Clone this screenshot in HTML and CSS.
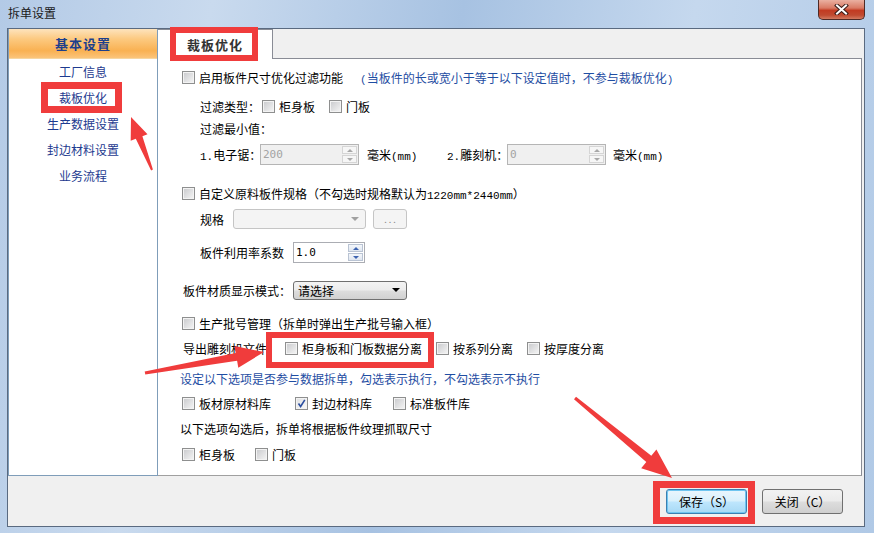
FILE: index.html
```html
<!DOCTYPE html>
<html>
<head>
<meta charset="utf-8">
<link rel="stylesheet" href="styles.css">
</head>
<body>
<div class="window">
  <div class="titlebar">
    <span class="title">拆单设置</span>
    <div class="closebtn">
      <svg width="15" height="11" viewBox="0 0 15 11"><path d="M3 1.5 L12 9.5 M12 1.5 L3 9.5" stroke="#3a1c18" stroke-width="4" stroke-linecap="square"/><path d="M3 1.5 L12 9.5 M12 1.5 L3 9.5" stroke="#fff" stroke-width="2" stroke-linecap="square"/></svg>
    </div>
  </div>
  <div class="client">
    <div class="main">
      <div class="sidebar">
        <div class="side-head">基本设置</div>
        <ul class="nav">
          <li>工厂信息</li>
          <li>裁板优化</li>
          <li>生产数据设置</li>
          <li>封边材料设置</li>
          <li>业务流程</li>
        </ul>
      </div>
      <div class="tabs">
        <div class="tabbar">
          <div class="tab">裁板优化</div>
          <div class="tabfill"></div>
        </div>
        <div class="panel">
          <div class="row mt8">
            <label class="chk"><span class="box"></span><span>启用板件尺寸优化过滤功能</span></label>
            <span class="blue note"><span class="lat">(</span>当板件的长或宽小于等于以下设定值时，不参与裁板优化<span class="lat">)</span></span>
          </div>
          <div class="row mt9 ind">
            <span class="w62">过滤类型：</span>
            <label class="chk"><span class="box"></span><span>柜身板</span></label>
            <label class="chk ml14"><span class="box"></span><span>门板</span></label>
          </div>
          <div class="row mt2 ind">
            <span>过滤最小值：</span>
          </div>
          <div class="row h21 mt6 ind">
            <span class="w60"><span class="lat">1.</span>电子锯：</span>
            <div class="spin dis w99"><span class="val">200</span><span class="arrows"><span class="up"></span><span class="dn"></span></span></div>
            <span class="unit">毫米<span class="lat">(mm)</span></span>
            <span class="w60"><span class="lat">2.</span>雕刻机：</span>
            <div class="spin dis w99"><span class="val">0</span><span class="arrows"><span class="up"></span><span class="dn"></span></span></div>
            <span class="unit2">毫米<span class="lat">(mm)</span></span>
          </div>
          <div class="row mt18">
            <label class="chk"><span class="box"></span><span>自定义原料板件规格（不勾选时规格默认为<span class="lat">1220mm*2440mm</span>）</span></label>
          </div>
          <div class="row mt6 ind">
            <span class="w33">规格</span>
            <div class="combo dis"><span></span><span class="tri gray"></span></div>
            <div class="dots">. . .</div>
          </div>
          <div class="row h21 mt13 ind">
            <span class="w93">板件利用率系数</span>
            <div class="spin w72"><span class="val on">1.0</span><span class="arrows blueA"><span class="up"></span><span class="dn"></span></span></div>
          </div>
          <div class="row mt17 out">
            <span class="w110">板件材质显示模式：</span>
            <div class="combo on"><span>请选择</span><span class="tri"></span></div>
          </div>
          <div class="row mt13">
            <label class="chk"><span class="box"></span><span>生产批号管理（拆单时弹出生产批号输入框）</span></label>
          </div>
          <div class="row mt5 out">
            <span class="w102">导出雕刻机文件</span>
            <label class="chk"><span class="box"></span><span>柜身板和门板数据分离</span></label>
            <label class="chk ml14"><span class="box"></span><span>按系列分离</span></label>
            <label class="chk ml14"><span class="box"></span><span>按厚度分离</span></label>
          </div>
          <div class="row mt10 left">
            <span class="blue">设定以下选项是否参与数据拆单，勾选表示执行，不勾选表示不执行</span>
          </div>
          <div class="row mt5">
            <label class="chk"><span class="box"></span><span>板材原材料库</span></label>
            <label class="chk ml24"><span class="box checked"><svg width="11" height="11" viewBox="0 0 11 11"><path d="M2.5 5.5 L4.6 8.5 L8.8 1.8" fill="none" stroke="#2b4ea0" stroke-width="1.6"/></svg></span><span>封边材料库</span></label>
            <label class="chk ml21"><span class="box"></span><span>标准板件库</span></label>
          </div>
          <div class="row mt5 left">
            <span>以下选项勾选后，拆单将根据板件纹理抓取尺寸</span>
          </div>
          <div class="row mt6">
            <label class="chk"><span class="box"></span><span>柜身板</span></label>
            <label class="chk ml20"><span class="box"></span><span>门板</span></label>
          </div>
        </div>
      </div>
    </div>
    <div class="footer">
      <button class="btn def">保存（S）</button>
      <button class="btn">关闭（C）</button>
    </div>
  </div>
</div>
<svg class="overlay" width="874" height="533" viewBox="0 0 874 533">
  <g fill="none" stroke="#f03c3c">
    <rect x="173" y="30" width="82" height="28" stroke-width="6"/>
    <rect x="44.5" y="85.5" width="74" height="24" stroke-width="7"/>
    <rect x="269" y="335" width="162" height="30" stroke-width="6"/>
    <rect x="656.5" y="484.5" width="95" height="36" stroke-width="7"/>
  </g>
  <g fill="#f03c3c">
    <polygon points="131,117 147.5,134.2 142.4,136.2 152.9,169.6 151.1,170.4 135.8,138.8 130.7,140.8"/>
    <polygon points="264,352 234.5,346.1 235.7,353.0 144.7,371.5 145.3,374.5 237.1,360.8 238.3,367.7"/>
    <polygon points="672,478 656.4,449.6 651.3,455.8 576.0,396.8 574.0,399.2 646.3,462.0 641.2,468.2"/>
  </g>
</svg>
</body>
</html>
```
FILE: styles.css
```css
* { box-sizing: border-box; margin: 0; padding: 0; }
html, body { width: 874px; height: 533px; overflow: hidden; }
body {
  font-family: "Noto Sans CJK SC", "Noto Sans", sans-serif;
  font-size: 12px;
  color: #000;
  position: relative;
}
.lat { font-family: "Liberation Mono", monospace; font-size: 11px; }
.window {
  width: 874px;
  height: 533px;
  display: flex;
  flex-direction: column;
  padding: 0 9px 6px 7px;
  background: linear-gradient(100deg, #b3cae6 0%, #c9daee 22%, #a7c2e2 48%, #c5d8ee 72%, #b0c9e6 100%);
}
.titlebar {
  height: 28px;
  display: flex;
  align-items: flex-start;
  justify-content: space-between;
  padding-left: 1px;
}
.title { line-height: 26px; color: #1a1a1a; }
.closebtn {
  width: 47px;
  height: 20px;
  border: 1px solid #4e2a25;
  border-top: none;
  border-radius: 0 0 5px 5px;
  background: linear-gradient(#eab0a1, #d97a64 42%, #c23b22 55%, #c04a30 80%, #d37a60 100%);
  display: flex;
  align-items: center;
  justify-content: center;
}
.client {
  flex: 1;
  border: 1px solid #5a6a80;
  background: #f0f0f0;
  display: flex;
  flex-direction: column;
}
.main { display: flex; height: 447px; }
.sidebar {
  width: 150px;
  border: 1px solid #7f9db9;
  border-top: none;
  background: #fff;
  display: flex;
  flex-direction: column;
}
.side-head {
  height: 30px;
  background: linear-gradient(#fde3bd, #fcc97f 35%, #f9b152 75%, #fbc47a);
  border-bottom: 1px solid #f6d6a0;
  font-weight: bold;
  font-size: 13px;
  color: #1d3f8c;
  display: flex;
  align-items: center;
  justify-content: center;
  letter-spacing: 1px;
}
.nav { list-style: none; display: flex; flex-direction: column; align-items: center; }
.nav li { height: 26px; line-height: 26px; color: #1d3a8f; }

.tabs { width: 704px; display: flex; flex-direction: column; }
.tabbar { height: 30px; display: flex; }
.tab {
  width: 115px;
  background: #fff;
  border-right: 1px solid #898c95;
  border-top: 1px solid #898c95;
  font-weight: bold;
  font-size: 13px;
  color: #333;
  display: flex;
  align-items: center;
  justify-content: center;
  letter-spacing: 1px;
}
.tabfill { flex: 1; border-bottom: 1px solid #898c95; }
.panel {
  flex: 1;
  background: #fff;
  border-right: 1px solid #898c95;
  border-bottom: 1px solid #a0a0a0;
  padding: 0 0 0 24px;
  display: flex;
  flex-direction: column;
}
.row { height: 20px; display: flex; align-items: center; flex-shrink: 0; white-space: nowrap; }
.row.h21 { height: 21px; }
.ind { padding-left: 18px; }
.out { padding-left: 1px; }
.left { margin-left: -2px; }
.mt2 { margin-top: 2px; }
.mt5 { margin-top: 5px; }
.mt6 { margin-top: 6px; }
.mt8 { margin-top: 8px; }
.mt9 { margin-top: 9px; }
.mt10 { margin-top: 10px; }
.mt13 { margin-top: 13px; }
.mt17 { margin-top: 17px; }
.mt18 { margin-top: 18px; }
.ml14 { margin-left: 14px; }
.ml20 { margin-left: 20px; }
.ml21 { margin-left: 21px; }
.ml24 { margin-left: 24px; }
.w33 { width: 33px; }
.w60 { width: 60px; }
.w62 { width: 62px; }
.w93 { width: 93px; }
.w102 { width: 102px; }
.w110 { width: 110px; }
.blue { color: #1f4ea3; }
.note { margin-left: 17px; }

.chk { display: flex; align-items: center; gap: 4px; }
.box {
  width: 13px;
  height: 13px;
  border: 1px solid #8e8f8f;
  background: linear-gradient(135deg, #c8c9cc, #f6f6f6);
  box-shadow: inset 0 0 0 1px #f3f3f3;
  display: flex;
  align-items: center;
  justify-content: center;
}
.box.checked { background: linear-gradient(135deg, #dfe0e2, #fafafa); }

.spin {
  height: 21px;
  border: 1px solid #abadb3;
  background: #fff;
  display: flex;
}
.w99 { width: 99px; }
.w72 { width: 72px; }
.spin.dis { background: #f0f0f0; border-color: #b5b5b5; }
.spin .val { flex: 1; padding-left: 2px; line-height: 19px; color: #a3a3a3; font-family: "DejaVu Sans Mono", monospace; font-size: 11px; }
.spin .val.on { color: #000; }
.arrows { width: 17px; display: flex; flex-direction: column; padding: 1px; gap: 1px; }
.arrows span {
  flex: 1;
  border: 1px solid #d5d5d5;
  background: #f6f6f6;
  display: flex;
  align-items: center;
  justify-content: center;
}
.arrows .up::after {
  content: "";
  border-left: 3px solid transparent;
  border-right: 3px solid transparent;
  border-bottom: 3px solid #a8a8a8;
}
.arrows .dn::after {
  content: "";
  border-left: 3px solid transparent;
  border-right: 3px solid transparent;
  border-top: 3px solid #a8a8a8;
}
.arrows.blueA span { border-color: #b9c3d3; background: linear-gradient(#f4f7fb, #dfe6f0); }
.arrows.blueA .up::after { border-bottom-color: #3d63b0; }
.arrows.blueA .dn::after { border-top-color: #3d63b0; }
.unit { margin-left: 8px; width: 80px; }
.unit2 { margin-left: 7px; }

.combo {
  height: 20px;
  border-radius: 3px;
  display: flex;
  align-items: center;
  justify-content: space-between;
  padding: 0 6px 0 4px;
}
.combo.dis {
  width: 133px;
  border: 1px solid #c5c5c5;
  background: #f4f4f4;
}
.combo.on {
  width: 114px;
  height: 19px;
  border: 1px solid #707070;
  background: linear-gradient(#f4f4f4, #ececec 48%, #dddddd 52%, #d1d1d1);
}
.tri {
  width: 0;
  height: 0;
  border-left: 4px solid transparent;
  border-right: 4px solid transparent;
  border-top: 4px solid #000;
}
.tri.gray { border-top-color: #a0a0a0; }
.dots {
  width: 34px;
  height: 20px;
  margin-left: 7px;
  border: 1px solid #c5c5c5;
  border-radius: 3px;
  background: #f4f4f4;
  color: #8a8a8a;
  font-size: 9px;
  display: flex;
  align-items: center;
  justify-content: center;
}

.footer {
  flex: 1;
  display: flex;
  justify-content: flex-end;
  align-items: flex-start;
  padding: 13px 21px 0 0;
  gap: 15px;
}
.btn {
  width: 81px;
  height: 25px;
  border: 1px solid #707070;
  border-radius: 3px;
  background: linear-gradient(#f2f2f2, #ebebeb 48%, #dddddd 52%, #cfcfcf);
  font-family: "Noto Sans CJK SC", sans-serif;
  font-size: 12px;
  color: #000;
}
.btn.def {
  border-color: #3c7fb1;
  background: linear-gradient(#eaf6fd, #d9f0fc 48%, #bee6fd 52%, #a7d9f5);
  box-shadow: inset 0 0 0 1px #6fc5f0;
}
.overlay { position: absolute; left: 0; top: 0; pointer-events: none; }
```
